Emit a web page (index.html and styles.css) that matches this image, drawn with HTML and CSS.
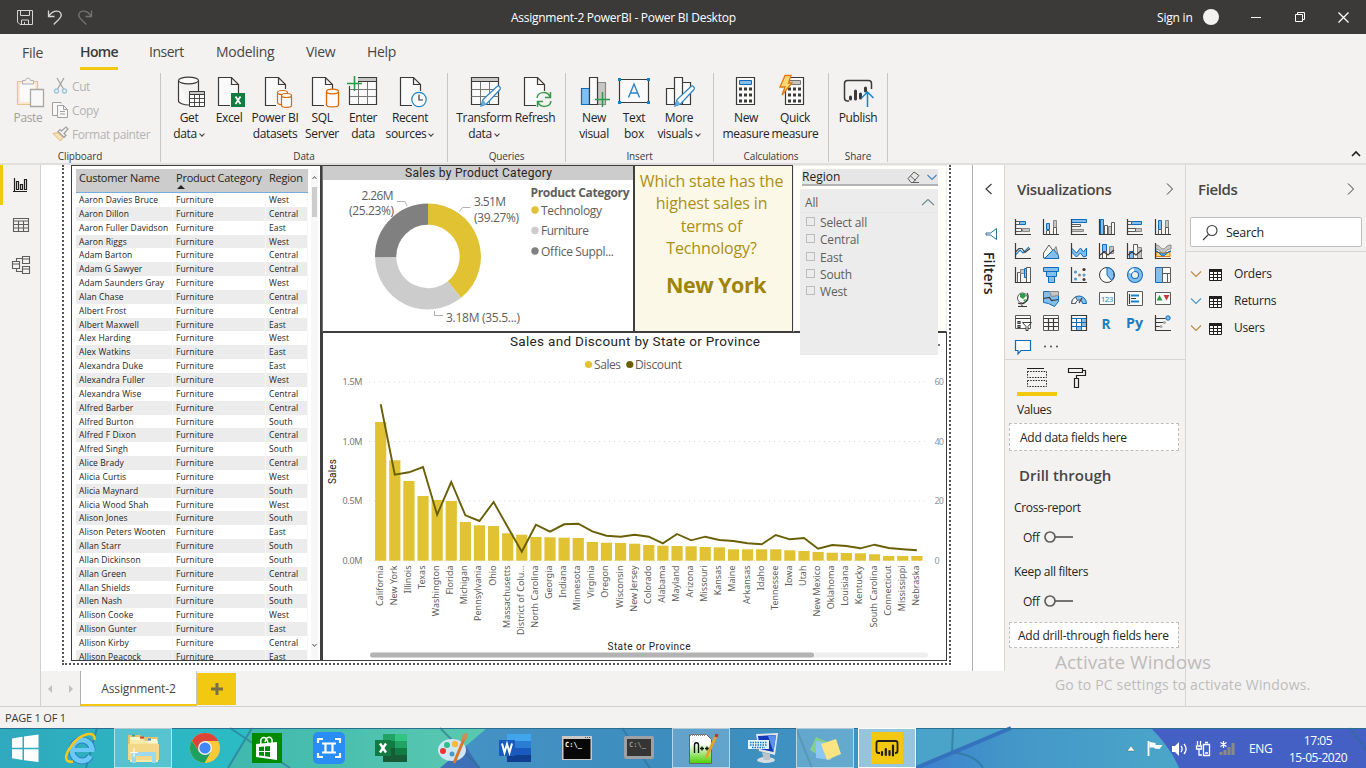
FILE: index.html
```html
<!DOCTYPE html>
<html lang="en">
<head>
<meta charset="utf-8">
<title>Assignment-2 PowerBI - Power BI Desktop</title>
<link rel="stylesheet" href="styles.css">
</head>
<body>
<div class="app">
  <header class="titlebar">
    <div class="quick">
      <svg width="80" height="20" viewBox="16 7 80 20" fill="none" stroke="#d6d4d2" stroke-width="1">
        <path d="M17.500 10.500h15v14h-12.500l-2.500-2.500zM20.500 10.500v5h9v-5M21.500 24.500v-4.500h7v4.500M24.500 22v2"/>
        <path stroke-width="1.300" d="M48.500 10.500v6h6M48.800 16.200c2.500-4 5-5 8-5 3.500 0 5.200 2.800 4 5.600-.8 1.800-4.500 5-7 7.700"/>
        <path stroke="#75736f" stroke-width="1.300" d="M91.500 10.500v6h-6M91.200 16.200c-2.500-4-5-5-8-5-3.500 0-5.200 2.800-4 5.600.8 1.800 4.500 5 7 7.700"/>
      </svg>
    </div>
    <div class="app-title">Assignment-2 PowerBI - Power BI Desktop</div>
    <div class="account"><span>Sign in</span><i></i></div>
    <svg class="winctl" width="110" height="20" viewBox="1246 7 110 20" fill="none" stroke="#fff" stroke-width="1">
      <path d="M1251 17.500h10M1295.500 14.500h7v7h-7zM1297.500 14.500v-2h7v7h-2"/><path stroke-width="1.300" d="M1338.500 12.500l10 10M1348.500 12.500l-10 10"/>
    </svg>
  </header>

  <nav class="tabs">
    <span class="t-file">File</span><span class="t-home active">Home</span><span class="t-insert">Insert</span><span class="t-model">Modeling</span><span class="t-view">View</span><span class="t-help">Help</span>
  </nav>

  <section class="ribbon">
    <div class="group g-clip">
      <div class="btns">
        <div class="btn w56 off">
          <svg width="32" height="32" fill="none"><path fill="#fbe9cc" stroke="#e6c48c" stroke-width="1.200" d="M5.500 5.500h20v23h-20z"/><path fill="#fafafa" stroke="none" d="M8 8h15v18H8z"/><path fill="#f3f2f1" stroke="#b3b0ad" d="M10.500 8v-3.500h3c0-3 5-3 5 0h3V8z"/><path fill="#f8f8f8" stroke="#a9a7a5" stroke-width="1.300" d="M18.500 13.500h13v17h-13z"/></svg>
          <b>Paste</b>
        </div>
        <div class="small-btns">
          <div><svg width="18" height="18" fill="none" stroke="#a19f9d"><path stroke-width="1.200" d="M5 1l6.500 11M12 1L5.500 12"/><circle cx="4.500" cy="14" r="2" stroke="#9bc5e4" stroke-width="1.400"/><circle cx="12.500" cy="14" r="2" stroke="#9bc5e4" stroke-width="1.400"/></svg><span>Cut</span></div>
          <div><svg width="18" height="18" fill="#f8f8f8" stroke="#a19f9d"><path d="M9 2.500V1.500H.5v13H5"/><path d="M5.500 4.500h6l4 4v8h-10zM11.500 4.500v4h4M8 10.500h5M8 13h5"/></svg><span>Copy</span></div>
          <div><svg width="18" height="18" fill="none" stroke="#a19f9d"><path fill="#fbe0b8" stroke="#e3b880" d="M1 8.500l5-1 5 5-2.500 3.500z"/><path stroke-width="1.200" d="M6 6.500l6 6 2-2-2-2 4-4.500L14 2l-4.500 4-1.500-1.500z"/></svg><span>Format painter</span></div>
        </div>
      </div>
      <em>Clipboard</em>
    </div>
    <div class="group g-data">
      <div class="btns">
        <div class="btn w40"><svg width="32" height="32" fill="#fafafa" stroke="#3b3a39"><path stroke-width="1.200" d="M5.500 5v20c0 2 5 4 10.500 4M25.500 5v10"/><ellipse cx="15.500" cy="4.500" rx="10" ry="3.300" stroke-width="1.200"/><path d="M16.500 15.500h15v15h-15z"/><path fill="#c8c6c4" d="M16.500 15.500h15v3h-15z"/><path d="M16.500 22.500h15M16.500 26.500h15M21.500 18v12M26.500 18v12" stroke-width=".9"/></svg><b>Get<br>data<u></u></b></div>
        <div class="btn w40"><svg width="32" height="32" fill="#fafafa" stroke="#3b3a39" stroke-width="1.200"><path d="M17 29.500H5.500v-28h13l7 7V17M18.500 1.500v7h7"/><path fill="#107c41" stroke="none" d="M18 17h14v14H18z"/><path stroke="#fff" stroke-width="1.800" d="M22.500 20.500l5 7.500M27.500 20.500l-5 7.500"/></svg><b>Excel</b></div>
        <div class="btn w52"><svg width="32" height="32" fill="#fafafa" stroke="#3b3a39" stroke-width="1.200"><path d="M17 29.500H6.500v-28h13l7 7V13M19.500 1.500v7h7"/><g stroke="#d86a0c"><path d="M18.500 17v9.500c0 1 2 2 4 2.200"/><ellipse cx="23.500" cy="16.500" rx="5" ry="2"/><path d="M22.500 19.500v10c0 2.500 10 2.500 10 0v-10"/><ellipse cx="27.500" cy="19.500" rx="5" ry="2"/></g></svg><b>Power BI<br>datasets</b></div>
        <div class="btn w42"><svg width="32" height="32" fill="#fafafa" stroke="#3b3a39" stroke-width="1.200"><path d="M18 29.500H6.500v-28h13l7 7V13M19.500 1.500v7h7"/><g stroke="#d86a0c" stroke-width="1.300"><path d="M20.500 16v13c0 2.500 12 2.500 12 0V16"/><ellipse cx="26.500" cy="15.500" rx="6" ry="2.300"/></g></svg><b>SQL<br>Server</b></div>
        <div class="btn w40"><svg width="32" height="32" fill="#fafafa" stroke="#3b3a39"><path stroke-width="1.200" d="M2.500 1.500h27v27h-27z"/><path fill="#c8c6c4" d="M2.500 1.500h27v4h-27z"/><path stroke="#797775" d="M3 13.500h26M3 20.500h26M11.500 6v22M20.500 6v22"/><path fill="#f3f2f1" stroke="none" d="M0 0h11v10H0z"/><path stroke="#2d9c46" stroke-width="1.600" d="M7.500 0v15M0 7.500h15"/></svg><b>Enter<br>data</b></div>
        <div class="btn w54"><svg width="32" height="32" fill="#fafafa" stroke="#3b3a39" stroke-width="1.200"><path d="M18 29.500H6.500v-28h13l7 7V15M19.500 1.500v7h7"/><circle cx="25" cy="23.500" r="7.200" stroke="#1b83c5"/><path fill="none" d="M25 18.500v5.500h4"/></svg><b>Recent<br>sources<u></u></b></div>
      </div>
      <em>Data</em>
    </div>
    <div class="group g-query">
      <div class="btns">
        <div class="btn w54"><svg width="32" height="32" fill="#fafafa" stroke="#3b3a39"><path stroke-width="1.200" d="M3.500 1.500h27v27h-27z"/><path fill="#c8c6c4" d="M3.500 1.500h27v4h-27z"/><path stroke="#797775" d="M3.500 13.500h27M3.500 20.500h27M12.500 6v22M21.500 6v22"/><path stroke="#2c84c4" stroke-width="1.200" d="M13 30l2-6.500L29 10.500c1.500-1.500 4.500 1 3 3L18.500 28z"/><path fill="#66aee2" stroke="none" d="M13 30l2-6 3.500 4z"/></svg><b>Transform<br>data<u></u></b></div>
        <div class="btn w48"><svg width="32" height="32" fill="#fafafa" stroke="#3b3a39" stroke-width="1.200"><path d="M17 29.500H5.500v-28h13l7 7V15M18.500 1.500v7h7"/><path fill="none" stroke="#3a9a4b" stroke-width="1.500" d="M18 22c1-7 11-7 13-1M31.500 16v5.500H26M32 25c-1 7-11 7-13 1M18.500 31v-5.500H24"/></svg><b>Refresh</b></div>
      </div>
      <em>Queries</em>
    </div>
    <div class="group g-ins">
      <div class="btns">
        <div class="btn w44"><svg width="32" height="32" fill="#fafafa" stroke="#3b3a39" stroke-width="1.200"><path fill="#83beec" stroke="#0f6cbd" d="M3.500 12.500h8v16h-8z"/><path fill="#c8c6c4" stroke="#8a8886" d="M19.500 6.500h8v22h-8z"/><path d="M11.500 1.500h8v27h-8z"/><path stroke="#2d9c46" stroke-width="1.500" d="M24.500 16v15M17 23.500h15"/></svg><b>New<br>visual</b></div>
        <div class="btn w36"><svg width="32" height="32" fill="#fafafa" stroke="#3b3a39" stroke-width="1.200"><path d="M1.500 3.500h29v23h-29z"/><path fill="#1b83c5" stroke="none" d="M0 2h3v3H0zM29 2h3v3h-3zM0 25h3v3H0zM29 25h3v3h-3z"/><path fill="none" stroke="#2c84c4" stroke-width="1.400" d="M10.500 21.500L16 8l5.500 13.500M12.500 17h7"/></svg><b>Text<br>box</b></div>
        <div class="btn w54"><svg width="32" height="32" fill="#fafafa" stroke="#3b3a39" stroke-width="1.200"><path d="M3.500 12.500h8v16h-8zM19.500 6.500h8v22h-8zM11.500 1.500h8v27h-8z"/><path stroke="#2c84c4" d="M12 30l2-6.500L28 10.500c1.500-1.500 4.500 1 3 3L17.500 28z"/><path fill="#66aee2" stroke="none" d="M12 30l2-6 3.500 4z"/></svg><b>More<br>visuals<u></u></b></div>
      </div>
      <em>Insert</em>
    </div>
    <div class="group g-calc">
      <div class="btns">
        <div class="btn w48"><svg width="32" height="32" fill="#fafafa" stroke="#3b3a39"><path stroke-width="1.200" d="M6.500 1.500h18v27h-18z"/><path fill="#83beec" stroke="#0f6cbd" d="M9.500 4.500h12v4h-12z"/><path stroke-width="3" stroke-dasharray="3 2" d="M9 13h13M9 19h13M9 25h13"/></svg><b>New<br>measure</b></div>
        <div class="btn w50"><svg width="32" height="32" fill="#fafafa" stroke="#3b3a39"><path stroke-width="1.200" d="M6.500 1.500h18v27h-18z"/><path fill="#c8c6c4" stroke="#797775" d="M10.500 4.500h11v4h-11z"/><path stroke-width="3" stroke-dasharray="3 2" d="M9 13h13M9 19h13M9 25h13"/><path fill="#fbd873" stroke="#e07a10" stroke-width="1.300" d="M6-.5h6L9.500 7H13L3 19l3-8H1z"/></svg><b>Quick<br>measure</b></div>
      </div>
      <em>Calculations</em>
    </div>
    <div class="group g-share">
      <div class="btns">
        <div class="btn w58"><svg width="32" height="32" fill="none" stroke="#3b3a39" stroke-width="1.500"><path d="M7 25H5.500c-2 0-3-1-3-3V7.500c0-2 1-3 3-3h21c2 0 3 1 3 3V13"/><path stroke-width="3" stroke-linecap="round" d="M8.500 21v2M13.500 15v8M18.500 18v4M23.500 12v3"/><path stroke="#1b83c5" stroke-width="1.500" d="M25.500 31V16M19.500 22l6-6 6 6"/></svg><b>Publish</b></div>
      </div>
      <em>Share</em>
    </div>
    <svg class="collapse" width="10" height="8" fill="none" stroke="#201f1e" stroke-width="1.600"><path d="M1 6l4-4 4 4"/></svg>
  </section>

  <main class="work">
    <aside class="rail">
      <div class="rail-item on"><svg width="16" height="16" fill="none" stroke="#201f1e" stroke-width="1.200"><path d="M1.500 1v13M0 14.500h14M3.500 4.500h2v8h-2zM7.500 7.500h2v5h-2zM11.500 2.500h2v10h-2z"/></svg></div>
      <div class="rail-item"><svg width="18" height="16" fill="none" stroke="#605e5c" stroke-width="1.100"><path d="M1.500 1.500h15v13h-15zM1.500 4h15M1.500 7.500h15M1.500 11h15M6.500 4v10M11.500 4v10"/></svg></div>
      <div class="rail-item"><svg width="20" height="20" fill="none" stroke="#605e5c" stroke-width="1.100"><path d="M11.500 1.500h7v7h-7zM11.500 4h7M11.500 11.500h7v7h-7zM11.500 14h7M1.500 6.500h7v7h-7zM1.500 9h7M5.500 6.500v-3h6M5.500 13.500v3h6"/></svg></div>
    </aside>

    <div class="center">
      <div class="stage">
        <div class="page">
          <div class="visual table-visual">
            <div class="grid" id="customers">
              <div class="thead"><span>Customer Name</span><span>Product Category</span><span>Region</span></div>
            </div>
            <div class="scroller">
              <svg width="7" height="5" fill="none" stroke="#555"><path d="M1.500 4l2-2.500 2 2.500"/></svg><i></i>
              <svg width="7" height="5" fill="none" stroke="#555"><path d="M1.500 1l2 2.500L5.500 1"/></svg>
            </div>
          </div>
          <div class="visual donut-visual">
            <svg width="311" height="165" viewBox="323 166 311 165">
              <rect x="322" y="165" width="312" height="15" fill="#ccc"/>
              <text class="din" x="405" y="177" textLength="147">Sales by Product Category</text>
              <g fill="none" stroke-width="21.300">
                <path stroke="#e1c233" d="M428 214.200A42.300 42.300 0 0 1 454.410 289.540"/>
                <path stroke="#ccc" d="M454.410 289.540A42.300 42.300 0 0 1 385.700 257.110"/>
                <path stroke="#808080" d="M385.700 257.110A42.300 42.300 0 0 1 428 214.200"/>
              </g>
              <path fill="none" stroke="#b3b0ad" d="M397 201.500h8l2 4.500M470.500 207.500h-8l-3 4M434.500 311v4.500h8.500"/>
              <g class="lbl">
                <text x="361.500" y="200" textLength="32">2.26M</text><text x="349" y="215" textLength="45">(25.23%)</text>
                <text x="474" y="206" textLength="32">3.51M</text><text x="474" y="222" textLength="45">(39.27%)</text>
                <text x="446" y="322" textLength="74">3.18M (35.5...)</text>
                <text x="530.500" y="197" textLength="99" font-weight="700">Product Category</text>
                <text x="541" y="215" textLength="61">Technology</text>
                <text x="541" y="235" textLength="48">Furniture</text>
                <text x="541" y="256" textLength="73">Office Suppl...</text>
              </g>
              <circle cx="535" cy="210" r="3.700" fill="#e1c233"/><circle cx="535" cy="230.500" r="3.700" fill="#ccc"/><circle cx="535" cy="251" r="3.700" fill="#808080"/>
            </svg>
          </div>
          <div class="visual card-visual">
            <p>Which state has the<br>highest sales in<br>terms of<br>Technology?</p>
            <strong>New York</strong>
          </div>
          <div class="visual slicer-visual">
            <div class="slicer-head"><span>Region</span>
              <svg width="32" height="14" fill="none" stroke="#605e5c"><path d="M2 8.500l6-6.500 5 3.500-6 7H5zM4.500 6l5 4.500M5 12.500h8"/><path stroke="#4a86b8" stroke-width="1.200" d="M21.500 5l4.500 4.500L30.500 5"/></svg>
            </div>
            <div class="dropdown">
              <div class="dd-all"><span>All</span><svg width="14" height="8" fill="none" stroke="#6c8c8c" stroke-width="1.100"><path d="M1 7l6-5.500L13 7"/></svg></div>
              <label><i></i>Select all</label><label><i></i>Central</label><label><i></i>East</label><label><i></i>South</label><label><i></i>West</label>
            </div>
          </div>
          <div class="visual combo-visual">
            <svg id="combo" width="623" height="327" viewBox="323 333 623 327"></svg>
          </div>
        </div>
      </div>
      <div class="pagetabs">
        <span class="arrows"><svg width="28" height="10" fill="#c2c0be"><path d="M6 1v8L2 5zM23 1v8l4-4z"/></svg></span>
        <span class="ptab">Assignment-2</span>
        <span class="padd"><svg width="12" height="12"><path stroke="#7a6f45" stroke-width="3" d="M6 0v12M0 6h12"/></svg></span>
      </div>
    </div>

    <aside class="filters">
      <svg width="10" height="14" fill="none" stroke="#3b3a39" stroke-width="1.200"><path d="M7.500 2L2 7l5.500 5"/></svg>
      <svg class="fun" width="14" height="14" fill="none" stroke="#2e6f9e"><path d="M12.500 1.500v11L6.500 8H2V6h4.500z"/></svg>
      <span>Filters</span>
    </aside>

    <aside class="viz">
      <div class="phead"><h2>Visualizations</h2><svg width="9" height="14" fill="none" stroke="#3b3a39"><path d="M2 1.500L7.500 7 2 12.500"/></svg></div>
      <div class="vizgrid" id="vizgrid"></div>
      <div class="viztabs">
        <div class="vt on"><svg width="22" height="22" fill="none" stroke="#201f1e"><path d="M1 1.500h17"/><path stroke-dasharray="1.500 1.200" d="M1.500 4.500h19v6h-19zM1.500 13.500h19v6h-19z"/></svg></div>
        <div class="vt"><svg width="22" height="22" fill="none" stroke="#201f1e" stroke-width="1.200"><path d="M2.500 1.500h14v4h-14zM16.500 3.500h3v5h-9v3M8.500 11.500h4v9h-4z"/></svg></div>
      </div>
      <div class="vlabel">Values</div>
      <div class="well">Add data fields here</div>
      <h2 class="drill">Drill through</h2>
      <div class="opt">Cross-report</div>
      <div class="toggle">Off<svg width="32" height="14" fill="none" stroke="#605e5c"><circle cx="7" cy="7" r="5" stroke-width="1.700"/><path stroke-width="1.700" d="M12 7h18"/></svg></div>
      <div class="opt">Keep all filters</div>
      <div class="toggle">Off<svg width="32" height="14" fill="none" stroke="#605e5c"><circle cx="7" cy="7" r="5" stroke-width="1.700"/><path stroke-width="1.700" d="M12 7h18"/></svg></div>
      <div class="well well2">Add drill-through fields here</div>
    </aside>

    <aside class="fields">
      <div class="phead"><h2>Fields</h2><svg width="9" height="14" fill="none" stroke="#3b3a39"><path d="M2 1.500L7.500 7 2 12.500"/></svg></div>
      <div class="search"><svg width="17" height="17" fill="none" stroke="#3b3a39" stroke-width="1.100"><circle cx="10" cy="6.500" r="5"/><path d="M6.500 10.500L1 16"/></svg>Search</div>
      <div class="tree" id="tree"></div>
    </aside>
    <div class="watermark"><div>Activate Windows</div><span>Go to PC settings to activate Windows.</span></div>
  </main>

  <div class="status">PAGE 1 OF 1</div>

  <footer class="taskbar">
    <svg class="wall" width="1366" height="40" viewBox="0 728 1366 40" preserveAspectRatio="none">
      <defs>
        <linearGradient id="w1"><stop offset="0" stop-color="#2fa9bd"/><stop offset="1" stop-color="#2bbdc6"/></linearGradient>
        <linearGradient id="w2"><stop offset="0" stop-color="#3fb8ae"/><stop offset="1" stop-color="#5bc9b0"/></linearGradient>
        <linearGradient id="w3"><stop offset="0" stop-color="#4593c4"/><stop offset=".5" stop-color="#3d8cbe"/><stop offset="1" stop-color="#3f99c4"/></linearGradient>
        <linearGradient id="w4"><stop offset="0" stop-color="#3c7fd0"/><stop offset=".35" stop-color="#4397c8"/><stop offset="1" stop-color="#4ba6c9"/></linearGradient>
      </defs>
      <path fill="url(#w1)" d="M0 728h260v40H0z"/><path fill="url(#w2)" d="M252 728h240v40H228z"/>
      <path fill="url(#w3)" d="M487 728h450v40H440z"/><path fill="#3a62b4" fill-opacity=".7" d="M440 768l26-22 14 22z"/>
      <path fill="#4aa3c8" d="M917 728h95l-95 40z"/><path fill="url(#w4)" d="M1011 728h151q17 20 20 40H916z"/>
      <path fill="#4460c4" d="M1151 728h215v40h-187q-8-20-28-40z"/>
      <g fill="none" stroke="#2c708f" stroke-opacity=".6" stroke-width="2"><path d="M97 728l-11 40M252 728l-24 40M230 728l60 40M622 728l28 40M440 728l40 40M953 728l-1 24M950 752q25 2 33 16M796 728l16 40M1350 728l16 22"/></g>
      <path stroke="#3572bd" stroke-width="4" d="M1011 728l-95 40"/>
      <path stroke="#2a6f8f" d="M0 728.500h1366"/>
    </svg>
    <div class="apps">
      <span class="start"><svg width="28" height="28" fill="#fff"><path d="M1 4.500l10.500-1.700v11H1zM13 2.500L27.500.5v13.300H13zM1 15.200h10.500V26L1 24.300zM13 15.200h14.500V28L13 26.200z"/></svg></span>
      <span><svg width="32" height="32" fill="none"><path stroke="#2b7fc4" stroke-width="7" d="M27 18.500A10 10.500 0 1 0 25.500 24"/><path stroke="#6cc9f5" stroke-width="5" d="M27 18A10 10.500 0 1 0 25.500 24"/><path stroke="#6cc9f5" stroke-width="4" d="M8 18h21.500"/><path stroke="#f6c71c" stroke-width="2.500" d="M29.500 8C31-2 16 1 7 13S0 31 8 29.500"/></svg></span>
      <span class="open"><svg width="34" height="32"><path fill="#e5c36a" d="M2 3h12l2 2h16v23H2z"/><path fill="#f9e9a9" d="M4 7h13l2 2h13v21H4z"/><path fill="#fff6d0" d="M4 5h10v3H4zM22 7h9v4h-9z"/><path stroke="#3a9" stroke-width="2" d="M6 3.500h3"/><path stroke="#d43" stroke-width="2" d="M14 5.500h4"/><path stroke="#38c" stroke-width="2" d="M22 7.500h3"/><path fill="#f3d987" d="M2 12h31v16H2z"/><path fill="none" stroke="#9ed8ee" stroke-width="4" d="M8 31V22h20v9"/><path stroke="#fff" d="M8 16v9M4 20.500h8"/></svg></span>
      <span><svg width="32" height="32"><circle cx="16" cy="16" r="15" fill="#fbc938"/><path fill="#db4437" d="M16 9h13.300A15 15 0 0 0 3 8.500L9.500 19z"/><path fill="#1da15f" d="M2.800 8.800A15 15 0 0 0 15.500 31l6.500-11.500H9.800z"/><circle cx="16" cy="16" r="7" fill="#f1f1f1"/><circle cx="16" cy="16" r="5.600" fill="#4285f4"/></svg></span>
      <span><svg width="32" height="32"><path fill="#008a00" d="M1 1h30v30H1z"/><path fill="#fff" d="M5 12l21-2v18L5 25z"/><path fill="none" stroke="#fff" stroke-width="1.500" d="M10 12c-2-8 6-9 7-1M14 10c2-8 8-5 7 1"/><path fill="#008a00" d="M8 15l5-.5v4.500H8zM14 14.400l5-.4v5h-5zM8 20h5v4l-5-.5zM14 20h5v5l-5-.7z"/></svg></span>
      <span><svg width="32" height="32"><rect width="32" height="32" rx="5" fill="#2a8df5"/><path fill="none" stroke="#fff" stroke-width="2.200" d="M5 11V7h5M22 7h5v4M5 21v4h5M22 25h5v-4M9 11.500h14M9 20.500h14M12.500 11v10M19.500 11v10"/></svg></span>
      <span><svg width="34" height="32"><path fill="#21a366" d="M9 2h24v28H9z"/><path fill="#33c481" d="M21 2h12v7H21z"/><path fill="#107c41" d="M9 9h12v7H9zM21 16h12v7H21z"/><path fill="#185c37" d="M9 16h12v7h12v7H9z"/><path fill="#107c41" d="M1 8h16v16H1z"/><path stroke="#fff" stroke-width="2.400" d="M6 11.500l6 9M12 11.500l-6 9"/></svg></span>
      <span><svg width="32" height="32"><ellipse cx="15" cy="18" rx="14" ry="11" fill="#cfe6f5"/><circle cx="6" cy="19" r="3" fill="#e33"/><circle cx="10" cy="13" r="3" fill="#3b8"/><circle cx="18" cy="12" r="3.200" fill="#f6b93c"/><circle cx="15" cy="22" r="2.500" fill="#4a9ac4"/><path stroke="#d9792b" stroke-width="3" d="M27 7L17 31"/><path fill="#c98f55" d="M24 8l2-6 5-1-1 6z"/></svg></span>
      <span><svg width="34" height="32"><path fill="#41a5ee" d="M9 2h24v7H9z"/><path fill="#2b7cd3" d="M9 9h24v7H9z"/><path fill="#185abd" d="M9 16h24v7H9z"/><path fill="#103f91" d="M9 23h24v7H9z"/><path fill="#185abd" d="M1 8h16v16H1z"/><path fill="none" stroke="#fff" stroke-width="2" d="M4 11.500l2.500 9L9 12l2.500 8.500 2.500-9"/></svg></span>
      <span><svg width="32" height="28"><path fill="#c9c9c9" d="M1 2h30v24H1z"/><path fill="#080808" d="M2.500 5h27v20h-27z"/><path stroke="#555" stroke-dasharray="1 1" d="M24 3.500h6"/><text x="4" y="13" class="cmd">C:\_</text></svg></span>
      <span><svg width="32" height="28"><rect x="1" y="2" width="30" height="23" rx="2" fill="#9da1a3"/><path fill="#353535" d="M4 5h24v17H4z"/><text x="6" y="13" class="cmd dim">C:\_</text></svg></span>
      <span class="open"><svg width="32" height="34"><defs><linearGradient id="np" x2="0" y2="1"><stop offset=".3" stop-color="#fff"/><stop offset="1" stop-color="#4cd000"/></linearGradient></defs><path fill="url(#np)" stroke="#666" d="M4.500 3.500h17l5 5v24h-22z"/><path stroke="#888" stroke-dasharray="1 1" stroke-width="2" d="M5 4h16"/><path fill="none" stroke="#111" stroke-width="1.400" d="M9.500 22v-8c0-3 4-3 4 0v8M15 17.500h4M17 15.500v4M20 17.500h4M22 15.500v4"/><path stroke="#e5a32c" stroke-width="3" d="M31 5L21 27"/><path stroke="#b33" stroke-width="3" d="M32 3l-1 3"/></svg></span>
      <span><svg width="34" height="34"><path fill="#dfe6ec" d="M10 3l22-1-3 22-16-4z"/><path fill="#1438b8" d="M12 5l18-1-2.500 17L14 18z"/><path fill="#5b8ff0" d="M22 5l8-1-2.500 17z"/><ellipse cx="20" cy="29" rx="9" ry="3" fill="#d6dce0"/><path fill="#bcc4ca" d="M16 21l8 2v6h-6z"/><path fill="#e3f2fb" d="M2 9h21v9H2z"/><path stroke="#1a75c4" stroke-width="1.500" stroke-dasharray="1.500 1" d="M4 11.500h17M4 14h17M6 16.500h13"/></svg></span>
      <span class="open"><svg width="34" height="32"><path fill="#82cf8e" d="M8 5l16 7-9 14L2 18z"/><path fill="#8cc8f2" d="M8 9l17 3-2 16-15-2z"/><path fill="#fbe481" d="M13 12l15-5 5 15-14 6z"/></svg></span>
      <span class="open cur"><svg width="32" height="32"><path fill="#f2c811" d="M0 0h32v32H0z"/><path fill="none" stroke="#201f1e" stroke-width="1.800" d="M9 21H7.500c-1.500 0-2-1-2-2v-8c0-1.500 1-2 2-2h17c1.500 0 2 1 2 2v8c0 1-1 2-2 2H24"/><path stroke="#201f1e" stroke-width="2.200" stroke-linecap="round" d="M11 20v3M14.800 17v6M18.500 19v4M22 13.500v10"/></svg></span>
    </div>
    <svg class="tray" width="120" height="24" viewBox="1122 736 120 24" fill="none" stroke="#fff" stroke-width="1.300">
      <path fill="#fff" stroke="#375" stroke-width=".5" d="M1127 751l4-5 4 5z"/>
      <path stroke-width="1.800" d="M1148.500 741v15"/><path fill="#fff" stroke="none" d="M1149.500 742l6 1v2h7l-3 4-5-.5v-1h-5z"/>
      <path fill="#fff" stroke="none" d="M1172 746h3l4-4v14l-4-4h-3z"/><path d="M1181 746c1.500 2 1.500 4 0 6M1184 744c2.500 3 2.500 7 0 10"/>
      <path d="M1203.500 744.500h6v11h-6zM1205 742.500h3M1205 753h3M1197.500 741v4M1200.500 741v4M1196.500 746h5v3h-5zM1199 749v6h3"/>
      <path stroke="#8b8b86" stroke-width="3" d="M1221 755v-3M1225 755v-5M1229 755v-8M1233 755v-12"/><path d="M1223.500 741v7M1220.500 742.500l6 4M1226.500 742.500l-6 4"/>
    </svg>
    <span class="lang">ENG</span>
    <div class="clock">17:05<br>15-05-2020</div>
  </footer>
</div>
<script src="script.js"></script>
</body>
</html>
```
FILE: styles.css
```css
* { box-sizing: border-box; }
body { margin: 0; font-family: "Open Sans", "Noto Sans", sans-serif; color: #252423; font-size: 12px; }
svg { display: block; flex: none; overflow: visible; }
.app { width: 1366px; height: 768px; display: flex; flex-direction: column; overflow: hidden; background: #f3f2f1; }

/* title bar */
.titlebar { height: 34px; flex: none; background: #3b3a39; color: #fff; display: flex; align-items: center; padding: 0 10px 0 16px; }
.quick { width: 495px; }
.app-title { width: 646px; font-size: 12px; letter-spacing: -.26px; }
.account { display: flex; align-items: center; gap: 10px; width: 89px; font-size: 12px; letter-spacing: -.2px; }
.account i { width: 16px; height: 16px; border-radius: 50%; background: #f3f2f1; }

/* ribbon tabs */
.tabs { height: 38px; flex: none; display: flex; font-size: 14px; line-height: 36px; color: #484644; letter-spacing: -.3px; }
.tabs span { height: 36px; }
.t-file { margin-left: 22px; width: 58px; padding-top: 1px; }
.t-home { width: 38px; margin-right: 31px; }
.tabs .active { font-weight: 600; color: #3b3a39; border-bottom: 3px solid #f2c811; letter-spacing: -.6px; }
.t-insert { width: 67px; letter-spacing: -.5px; }
.t-model { width: 90px; }
.t-view { width: 61px; }

/* ribbon */
.ribbon { height: 93px; flex: none; display: flex; position: relative; border-bottom: 2px solid #e1dfdd; }
.group { height: 89px; margin-top: 1px; border-right: 1px solid #c8c6c4; display: flex; flex-direction: column; justify-content: space-between; align-items: center; }
.g-clip { width: 161px; } .g-data { width: 287px; } .g-query { width: 118px; } .g-ins { width: 148px; } .g-calc { width: 115px; } .g-share { width: 59px; }
.group em { font-style: normal; font-size: 10px; line-height: 11px; letter-spacing: -.12px; color: #3b3a39; }
.btns { display: flex; padding-top: 3px; align-self: stretch; }
.g-data .btns { padding-left: 8px; } .g-query .btns { padding-left: 9px; } .g-ins .btns { padding-left: 6px; } .g-calc .btns { padding-left: 8px; }
.btn { display: flex; flex-direction: column; align-items: center; flex: none; }
.btn b { font-weight: 400; font-size: 12px; line-height: 16px; margin-top: 2px; text-align: center; white-space: nowrap; letter-spacing: -.35px; color: #252423; }
.btn.off b { color: #a19f9d; }
.btn u { display: inline-block; width: 4px; height: 4px; margin: 0 1px 2px 3px; border-right: 1.500px solid #3b3a39; border-bottom: 1.500px solid #3b3a39; transform: rotate(45deg); }
.w36 { width: 36px; } .w40 { width: 40px; } .w42 { width: 42px; } .w44 { width: 44px; } .w48 { width: 48px; } .w50 { width: 50px; } .w52 { width: 52px; } .w54 { width: 54px; } .w56 { width: 56px; } .w58 { width: 58px; }
.small-btns { display: flex; flex-direction: column; margin-left: -4px; }
.small-btns div { height: 24px; display: flex; align-items: center; gap: 2px; color: #b5b3b1; font-size: 12px; letter-spacing: -.4px; }
.small-btns div:first-child { height: 20px; margin-bottom: 2px; }
.collapse { position: absolute; right: 5px; bottom: 5px; }

/* work area */
.work { height: 541px; flex: none; display: flex; position: relative; }
.rail { width: 41px; border-right: 1px solid #d2d0ce; display: flex; flex-direction: column; }
.rail-item { height: 40px; display: flex; align-items: center; justify-content: center; border-left: 3px solid transparent; padding-right: 2px; }
.rail-item.on { border-color: #f2c811; }
.center { width: 931px; display: flex; flex-direction: column; }
.stage { height: 506px; background: #fff; padding-left: 21px; }
.page { width: 889px; height: 500px; border: dotted #555; border-width: 0 2px 2px 2px; padding: 0 2px 2px 7px; display: grid; grid-template-columns: 251px 311px 160px 154px; grid-template-rows: 167px 329px; }
.visual { border: 1px solid #3f3f3f; overflow: hidden; }
.table-visual { grid-row: 1 / 3; display: flex; padding: 3px 0 0 4px; font-size: 8.500px; letter-spacing: .09px; border-width: 1px 2px 1px 1px; }
.grid { width: 232px; }
.thead, .row { display: grid; grid-template-columns: 97px 93px 42px; }
.thead { height: 24px; background: #ccc; border-bottom: 1px solid #74acdf; font-size: 11px; line-height: 17px; letter-spacing: -.22px; position: relative; white-space: nowrap; }
.thead span:first-child { letter-spacing: -.25px; }
.thead::after { content: ""; position: absolute; left: 101px; top: 16px; border: 4px solid transparent; border-top: 0; border-bottom-color: #252423; }
.row { height: 13.850px; line-height: 13.850px; white-space: nowrap; }
.row:nth-child(odd) { background: #ececec; }
.thead span, .row span { padding-left: 3px; }
.row span { border-right: 1px solid #f7f7f7; }
.scroller { width: 7px; margin-left: 3px; display: flex; flex-direction: column; align-items: center; padding-top: 6px; gap: 7px; background: #f7f7f7; }
.scroller i { width: 5px; height: 30px; background: #cdcdcd; }
.scroller svg:last-child { margin-top: 419px; }
.donut-visual { border-left-color: #777; border-right: 0; }
.din { font-family: Roboto, sans-serif; font-size: 12px; fill: #252423; }
.lbl { font-size: 12px; fill: #605e5c; }
.card-visual { background: #fbf8e7; text-align: center; color: #ac8f14; border-width: 1px 1px 1px 2px; }
.card-visual p { margin: 4px 0 0 -4px; font-size: 16px; line-height: 22.300px; letter-spacing: -.15px; white-space: nowrap; }
.card-visual strong { display: block; font-size: 21.500px; line-height: 30px; color: #a08407; margin: 11px 0 0 5px; letter-spacing: -.5px; }
.slicer-visual { background: #fffef8; border: 1px solid #eee; border-bottom: 1px solid #3f3f3f; overflow: visible; padding: 3px 8px 0 8px; position: relative; }
.slicer-head { height: 17px; background: #e6e6e6; border-bottom: 2px solid #b3b3b3; display: flex; justify-content: space-between; align-items: center; font-size: 12px; line-height: 14px; letter-spacing: 0; }
.slicer-head span { padding-top: 1px; }
.dropdown { position: absolute; left: 6px; top: 23px; width: 138px; height: 166px; background: #ececec; color: #605e5c; font-size: 12px; letter-spacing: -.2px; }
.dd-all { height: 24px; display: flex; justify-content: space-between; align-items: center; padding: 2px 3px 0 5px; border-bottom: 1px solid #e4e4e4; }
.dd-all span { padding-top: 1px; }
.dropdown label { display: flex; align-items: center; gap: 5px; height: 17.300px; padding-left: 6px; }
.dd-all + label { margin-top: 1px; }
.dropdown label i { width: 9px; height: 9px; border: 1.500px solid #bdbdbd; margin-top: -2px; }
.combo-visual { grid-column: 2 / 5; }
.axis { font-size: 9px; fill: #777; font-family: "Noto Sans", sans-serif; }
.cat { font-size: 9px; fill: #605e5c; font-family: "Noto Sans", sans-serif; }
.pagetabs { height: 35px; display: flex; background: #f3f2f1; }
.arrows { width: 39px; display: flex; align-items: center; padding-left: 5px; }
.ptab { width: 117px; background: #fff; border-left: 1px solid #b0aeac; border-right: 1px solid #c8c6c4; border-bottom: 2px solid #f2c811; text-align: center; line-height: 35px; letter-spacing: -.15px; font-weight: 500; color: #484644; }
.padd { width: 39px; margin: 2px 0 1px; background: #f2c811; display: flex; align-items: center; justify-content: center; }

.filters { width: 33px; background: #fff; border-left: 1px solid #b3b0ad; border-right: 1px solid #d8d6d4; display: flex; flex-direction: column; align-items: center; height: 506px; padding-top: 17px; }
.filters .fun { margin-top: 31px; margin-left: 4px; }
.filters span { writing-mode: vertical-rl; font-size: 14px; font-weight: 600; margin-top: 11px; letter-spacing: .15px; line-height: 18px; }

.viz { width: 181px; border-right: 1px solid #d8d6d4; }
.phead { height: 48px; display: flex; justify-content: space-between; align-items: center; padding: 0 11px 0 12px; }
.phead h2, .drill { margin: 0; font-size: 15px; font-weight: 600; letter-spacing: -.35px; color: #484644; }
.vizgrid { height: 147px; padding: 6px 0 0 10px; display: grid; grid-template-columns: repeat(6, 28px); grid-auto-rows: 24px; border-bottom: 1px solid #d8d6d4; }
.viztabs { display: flex; padding: 7px 0 0 12px; height: 36px; }
.vt { width: 40px; height: 29px; display: flex; justify-content: center; }
.vt.on { border-bottom: 4px solid #f2c811; border-radius: 1px; }
.vlabel { padding: 5px 0 0 12px; line-height: 18px; font-size: 12px; letter-spacing: -.4px; }
.well { width: 170px; height: 28px; margin: 4px 0 0 4px; border: 1px dashed #c0bebc; background: #fff; line-height: 27px; padding-left: 10px; font-size: 12px; letter-spacing: -.27px; white-space: nowrap; }
.viz .drill { padding: 13px 0 0 14px; line-height: 22px; letter-spacing: 0; }
.opt { padding-left: 9px; margin-top: 13px; line-height: 18px; font-size: 12px; letter-spacing: -.3px; }
.toggle { display: flex; align-items: center; gap: 3px; padding-left: 18px; height: 18px; margin-top: 11px; letter-spacing: -.3px; }
.toggle + .opt { margin-top: 17px; }
.well2 { height: 26px; line-height: 25px; padding-left: 8px; margin-top: 12px; letter-spacing: -.23px; }

.fields { width: 180px; }
.search { height: 30px; margin: 4px 4px 4px; border: 1px solid #c0bebc; border-radius: 2px; background: #fff; display: flex; align-items: center; gap: 7px; padding-left: 11px; font-size: 12.500px; letter-spacing: -.3px; }
.tree { border-top: 1px solid #d8d6d4; padding-top: 8px; }
.fields .tree { margin-top: 4px; }
.node { height: 27px; display: flex; align-items: center; font-size: 12px; letter-spacing: -.2px; padding-left: 4px; }
.node svg { margin-top: 2px; }
.node span { margin-left: 10px; }
.watermark { position: absolute; left: 1055px; top: 485px; color: #bdbcbb; white-space: nowrap; }
.watermark div { font-size: 19px; line-height: 24px; }
.watermark span { font-size: 14px; line-height: 22px; display: block; letter-spacing: .16px; }

.status { height: 22px; flex: none; padding-left: 5px; font-size: 11px; line-height: 22px; letter-spacing: -.2px; color: #3b3a39; border-top: 1px solid #d2d0ce; }

/* taskbar */
.taskbar { height: 40px; flex: none; position: relative; color: #fff; display: flex; align-items: center; }
.wall { position: absolute; left: 0; top: 0; }
.apps, .tray, .lang, .clock { position: relative; }
.apps { display: flex; gap: 4px; width: 1122px; height: 40px; }
.apps span { width: 58px; height: 40px; display: flex; align-items: center; justify-content: center; flex: none; }
.apps .start { width: 48px; padding-left: 2px; }
.apps .open { border: 1px solid rgba(255,255,255,.55); background: rgba(255,255,255,.2); }
.apps .cur { border-color: #fff; background: rgba(255,255,255,.45); }
.cmd { font: bold 7px "DejaVu Sans Mono", monospace; fill: #fff; }
.cmd.dim { fill: #999; }
.lang { width: 46px; padding-left: 7px; font-size: 12px; letter-spacing: -.4px; }
.clock { font-size: 12px; line-height: 17px; text-align: center; width: 62px; margin-left: -1px; padding-top: 2px; letter-spacing: -.45px; white-space: nowrap; }
```
FILE: script.js
```js
const customers = `Aaron Davies Bruce|West
Aaron Dillon|Central
Aaron Fuller Davidson|East
Aaron Riggs|West
Adam Barton|Central
Adam G Sawyer|Central
Adam Saunders Gray|West
Alan Chase|Central
Albert Frost|Central
Albert Maxwell|East
Alex Harding|West
Alex Watkins|East
Alexandra Duke|East
Alexandra Fuller|West
Alexandra Wise|Central
Alfred Barber|Central
Alfred Burton|South
Alfred F Dixon|Central
Alfred Singh|South
Alice Brady|Central
Alicia Curtis|West
Alicia Maynard|South
Alicia Wood Shah|West
Alison Jones|South
Alison Peters Wooten|East
Allan Starr|South
Allan Dickinson|South
Allan Green|Central
Allan Shields|South
Allen Nash|South
Allison Cooke|West
Allison Gunter|East
Allison Kirby|Central
Allison Peacock|East`.split('\n').map(r => r.split('|'));
document.getElementById('customers').insertAdjacentHTML('beforeend', customers.map(([n, r]) =>
  `<div class="row"><span>${n}</span><span>Furniture</span><span>${r}</span></div>`).join(''));

// state, y of the bar top, y of the discount point
const states = [['California',422,404.3],['New York',460.3,474.7],['Illinois',481,472.3],['Texas',496,467],['Washington',500,514.7],['Florida',501,482],['Michigan',522,515.3],['Pennsylvania',525.3,521],['Ohio',526,502],['Massachusetts',533.3,527],['District of Colu...',534.7,551.7],['North Carolina',537,524.7],['Georgia',537.3,531.7],['Indiana',537.7,524.3],['Minnesota',538,523.7],['Virginia',542,531.3],['Oregon',542.7,535.7],['Wisconsin',543,536.7],['New Jersey',543.7,534.7],['Colorado',545,536.7],['Alabama',545.7,543.3],['Mayland',546,534],['Arizona',546.3,540.3],['Missouri',547,536.7],['Kansas',547.3,540],['Maine',549.3,541],['Arkansas',549.3,543.3],['Idaho',549.3,544.3],['Tennessee',549.3,535],['Iowa',550.3,539.3],['Utah',551,538],['New Mexico',552,548.7],['Oklahoma',552.7,545],['Louisiana',553,546],['Kentucky',553.3,548.3],['South Carolina',554.3,544.7],['Connecticut',556,548],['Mississippi',556,549.3],['Nebraska',556,550.3]];
const cx = i => 380.7 + i * 14.11;
let c = '<text class="din" x="510" y="346" textLength="250" style="font-size:13.500px">Sales and Discount by State or Province</text>';
c += '<circle cx="588.500" cy="364.500" r="3.600" fill="#e1c233"/><circle cx="629.800" cy="364.500" r="3.600" fill="#6b5f06"/><g class="lbl"><text x="594" y="369" textLength="27">Sales</text><text x="635" y="369" textLength="47">Discount</text></g>';
[[382,'1.5M','60'],[441.5,'1.0M','40'],[501,'0.5M','20'],[560.7,'0.0M','0']].forEach(([y, l, r]) => {
  c += `<path stroke="#dcdcdc" stroke-dasharray="1 4" d="M369 ${y}h559"/><text class="axis" x="342.500" y="${y + 3.3}" textLength="20">${l}</text><text class="axis" style="fill:#8a9aa5" x="934.500" y="${y + 3}" textLength="${r.length * 4.7}">${r}</text>`;
});
states.forEach(([n, y], i) => {
  c += `<rect x="${cx(i) - 5.6}" y="${y}" width="11.200" height="${560.7 - y}" fill="#e1c233"/>`;
  c += `<text class="cat" text-anchor="end" transform="translate(${cx(i) + 2} 565.500) rotate(-90)">${n}</text>`;
});
c += `<polyline fill="none" stroke="#6b5f06" stroke-width="1.900" points="${states.map((s, i) => cx(i) + ',' + s[2]).join(' ')}"/>`;
c += '<text class="din" style="font-size:10px" x="607.500" y="650" textLength="83">State or Province</text><text class="din" style="font-size:10px" transform="translate(336 484) rotate(-90)" textLength="25">Sales</text>';
c += '<rect x="370" y="652.500" width="558" height="5" rx="2.500" fill="#eee"/><rect x="370" y="652.500" width="444" height="5" rx="2.500" fill="#b3b3b3"/><path fill="#777" d="M938 344h2v2h-2z"/>';
document.getElementById('combo').innerHTML = c;

// 16px glyphs of the visual gallery
const K = 'stroke="#3b3a39" fill="none" stroke-width="1.200"', B = 'stroke="#0f6cbd" fill="#83beec"', G = 'stroke="#8a8886" fill="#c8c6c4"', W = 'stroke="#5c5a58" fill="#fafafa"';
const p = (a, d) => `<path ${a} d="${d}"/>`;
const ax = p(K, 'M.5 0v15.500h15.500');
const icons = [
  p(B,'M.5 2.500h10v3H.500z')+p(W,'M.5 2.500h4v3h-4z')+p(G,'M7.500 9.500h7v3h-7z')+p(W,'M.5 9.500h6v3h-6z')+ax,
  p(B,'M3.500 4.500h3v6h-3z')+p(W,'M3.500 11.500h3v4h-3z')+p(G,'M10.500 1.500h3v7h-3z')+p(W,'M10.500 8.500h3v7h-3z')+ax,
  p(B,'M.5.500h15v3h-15z')+p(W,'M.5 5.500h9v2h-9z')+p(G,'M.5 10.500h12v2h-12z')+ax,
  p(B,'M1.500.500h3v15h-3z')+p(W,'M5.500 6.500h3v9h-3z')+p(G,'M9.500 7.500h3v8h-3z')+p(W,'M12.500 3.500h3v12h-3z')+ax,
  p(B,'M.5 2.500h14v3H.500z')+p(W,'M.5 2.500h4v3h-4z')+p(G,'M.5 9.500h14v3H.500z')+p(W,'M.5 9.500h8v3h-8z')+ax,
  p(B,'M3.500 1.500h3v9h-3z')+p(W,'M3.500 10.500h3v5h-3z')+p(G,'M10.500 1.500h3v7h-3z')+p(W,'M10.500 8.500h3v7h-3z')+ax,
  p('fill="none" stroke="#1b83c5" stroke-width="1.200"','M.5 12L5 7l3 3 6-6')+p(K,'M.5 9L4 5.500h3l3 4 5-4')+ax,
  p(G,'M6 15.500l7-12 3 12z')+p(W,'M.5 10L6 2l5 7-5 6H.500z')+p(B,'M1.500 15.500l9-9 5 6v3z'),
  p(B,'M.5 5l5 5 4-5 3 4 3-4v8l-3 1-3-4-4 4-5-5z')+ax,
  p(B,'M3.500 1.500h4v7h-4z')+p(W,'M3.500 8.500h4v7h-4z')+p(G,'M10.500 3.500h4v7h-4z')+p(K,'M1 12l4-3 4 3 6-5')+ax,
  p(B,'M2.500 8.500h4v7h-4z')+p(W,'M6.500 1.500h4v14h-4z')+p(G,'M10.500 4.500h4v11h-4z')+p(K,'M1 12l4-3 4 3 6-5')+ax,
  p('stroke="#e07a10" fill="#fbd873"','M1 9.500h14v4H1z')+p(G,'M.5 2c5 0 5 4 7.500 4s3-4 8-4v4c-5 0-5 4-8 4s-3-4-7.500-4z')+p(B,'M1 8c3 0 4 5 7 5s4-5 8-5c-4 1-4 3-8 3s-4-2-7-3z')+ax,
  p(W,'M2.500 5.500h3v10h-3z')+p(G,'M5.500 2.500h4v4h-4z')+p(B,'M9.500 1.500h2v9h-2z')+p(W,'M11.500.500h4v15h-4z')+ax,
  p(B,'M.5.500h15v4h-15zM3.500 4.500h10v5h-10zM5.500 9.500h6v6h-6z'),
  ax+'<g fill="#3b3a39"><circle cx="13" cy="2.500" r="1.600"/><circle cx="8.500" cy="8" r="1.500" fill="#8a8886"/><circle cx="13" cy="12.500" r="1.500"/></g><g fill="#4a9ad8"><circle cx="4.500" cy="5" r="1.600"/><circle cx="13" cy="8" r="1.500"/><circle cx="4.500" cy="12" r="1.500"/></g>',
  '<circle cx="8" cy="8" r="7.500" fill="#fafafa" stroke="#3b3a39"/>'+p(B,'M8 .5a7.500 7.500 0 0 1 4.500 13L8 8z'),
  '<circle cx="8" cy="8" r="5.500" fill="none" stroke="#0f6cbd" stroke-width="5"/><circle cx="8" cy="8" r="5.500" fill="none" stroke="#83beec" stroke-width="3"/>'+p('stroke="#fff" stroke-width="3" fill="none"','M3 6a5.500 5.500 0 0 1 4-3.300'),
  p(B,'M.5.500h7v15h-7z')+p(W,'M7.500.500h8v6h-8zM7.500 6.500h5v9h-5zM12.500 6.500h3v9h-3z'),
  '<circle cx="7.500" cy="7" r="5" fill="#fafafa" stroke="#555"/>'+p('fill="#2d9c46"','M5 3l4-1 2 3-3 3-3-2zM8 9l3-1-1 3z')+p(K,'M12 2a7 7 0 0 1-9 10M7 14v2M3 15.500h9'),
  p(B,'M.5.500h7l1 3 7-2v9l-4 5-6-3-5-1z')+p(G,'M6.500.500h9v4l-7 1z')+p(K,'M.5 7.500l6-1 2 3 7-1'),
  p(B,'M.5 12.500a7.500 7.500 0 0 1 15 0h-4a3.500 3.500 0 0 0-7 0z')+p(W,'M.5 12.500a7.500 7.500 0 0 1 4-6.500l2 3.500a3.500 3.500 0 0 0-2 3z')+p(K,'M8 12l3-5'),
  p(W,'M.5 1.500h15v12H.500z')+'<text x="1.800" y="10.500" font-size="8" fill="#1b83c5" textLength="12.500">123</text>',
  p(W,'M.5.500h15v14H.500z')+p('stroke="#1b83c5" stroke-width="2"','M4 4.500h8M4 10.500h8')+p(K,'M2.500 3v10M4 7.500h5'),
  p(W,'M.5 1.500h15v12H.500z')+p('fill="#2d9c46"','M1.500 9.500L4.500 4l3 5.500z')+p('fill="#d13438"','M8.500 4h6l-3 5.500z'),
  p(W,'M.5.500h15v13H.500z')+p(K,'M.5 3.500h15M3 6.500h2v2H3zM3 10.500h2v2H3z')+p('fill="#fff" stroke="#3b3a39"','M7.500 7.500h9l-3.500 4v4h-2v-4z'),
  p(W,'M.5.500h15v15H.500z')+p(K,'M.5 3.500h15M.5 7.500h15M.5 11.500h15M5.500 3v12M10.500 3v12'),
  p(W,'M.5.500h15v15H.500z')+p('fill="#83beec"','M10 4h5v7h-5zM5 11h5v4H5z')+p('stroke="#0f6cbd" fill="none"','M.5 3.500h15M.5 7.500h15M.5 11.500h15M5.500 3v12M10.500 3v12')+p(K,'M.5.500h15v15H.500z'),
  '<text x="2.500" y="14" font-size="15" font-weight="700" fill="#1b7fbf" textLength="9" lengthAdjust="spacingAndGlyphs">R</text>',
  '<text x="-1" y="12.500" font-size="14.500" font-weight="700" fill="#1b7fbf" textLength="17" lengthAdjust="spacingAndGlyphs">Py</text>',
  ax+p(K,'M.5 3.500h10M.5 7.500h9M.5 11.500h5')+'<circle cx="13" cy="3" r="2.200" fill="#83beec" stroke="#0f6cbd"/><circle cx="9.500" cy="7.500" r="1.500" fill="#aaa"/><circle cx="6" cy="11.500" r="1.500" fill="#aaa"/>',
  p('fill="#fafafa" stroke="#0f6cbd" stroke-width="1.200"','M.5 1.500h15v10H6l-3 3.500v-3.500H.500z'),
  '<g fill="#3b3a39"><circle cx="2" cy="7.500" r=".9"/><circle cx="8" cy="7.500" r=".9"/><circle cx="14" cy="7.500" r=".9"/></g>'
];
document.getElementById('vizgrid').innerHTML = icons.map(s => `<svg width="16" height="16">${s}</svg>`).join('');

document.getElementById('tree').innerHTML = [['Orders','#b98a42'],['Returns','#4a94c4'],['Users','#b98a42']].map(([n, k]) =>
  `<div class="node"><svg width="34" height="12" fill="none"><path stroke="${k}" stroke-width="1.100" d="M1 2.500l5 5 5-5"/><path stroke="#201f1e" fill="#fff" d="M19.500.5h12v11h-12zM19.500 5.500h12M19.500 8.500h12M23.500 3v8M27.500 3v8"/><path fill="#201f1e" d="M19 0h13v3H19z"/></svg><span>${n}</span></div>`).join('');
```
